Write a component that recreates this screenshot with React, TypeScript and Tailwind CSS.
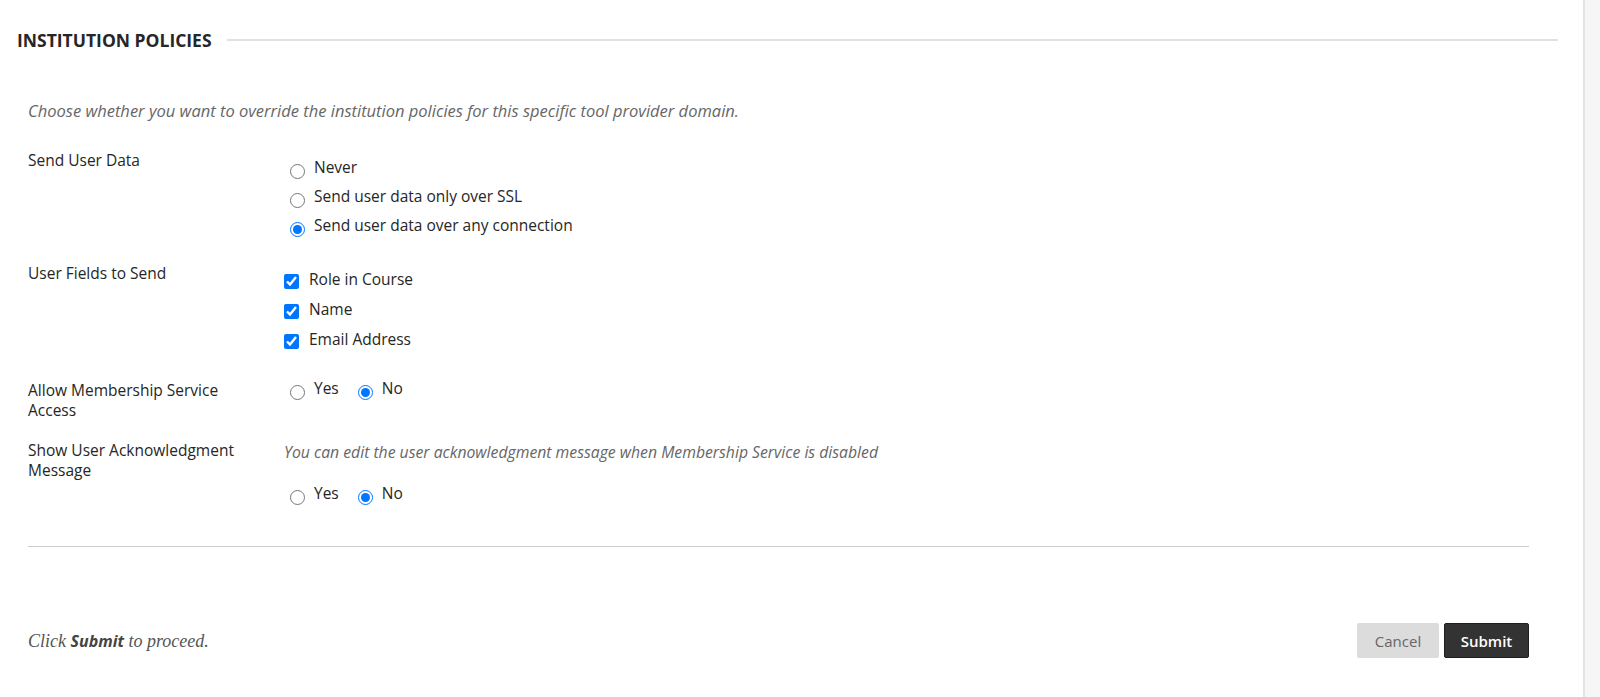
import type { ReactNode } from 'react';

const sans = { fontFamily: '"Open Sans", "Noto Sans", sans-serif' };

function Radio({ label, checked, name }: { label: string; checked?: boolean; name: string }) {
  return (
    <label className="flex items-start">
      <input
        type="radio"
        name={name}
        defaultChecked={checked}
        className="mt-[7px] ml-[6px] h-[15px] w-[15px] shrink-0 accent-[#0075ff]"
      />
      <span className="ml-[9px]">{label}</span>
    </label>
  );
}

function Checkbox({ label }: { label: string }) {
  return (
    <label className="flex items-start">
      <input type="checkbox" defaultChecked className="mt-[4.5px] h-[15px] w-[15px] shrink-0 accent-[#0075ff]" />
      <span className="ml-[10px]">{label}</span>
    </label>
  );
}

function Row({ label, className, children }: { label: ReactNode; className?: string; children: ReactNode }) {
  return (
    <div className={`flex ${className ?? ''}`}>
      <div className="w-[256px] shrink-0 pr-[24px] text-[#262626]">{label}</div>
      <div className="flex-1 text-[#262626]">{children}</div>
    </div>
  );
}

export default function App() {
  return (
    <div className="flex h-[697px] w-full bg-white" style={sans}>
      <main className="flex-1">
        <div className="flex items-center pt-[28px] pl-[17px] pr-[25px]">
          <h2 className="text-[17.5px] font-bold uppercase leading-[24px] text-[#262626]">Institution Policies</h2>
          <div className="ml-[15px] h-[2px] flex-1 bg-[#e1e1e1]" />
        </div>

        <div className="pl-[28px] pr-[54px] text-[15.5px] leading-[20px]">
          <p className="mt-[49px] text-[16.5px] italic text-[#666666]">
            Choose whether you want to override the institution policies for this specific tool provider domain.
          </p>

          <Row label="Send User Data" className="mt-[29px]">
            <div className="flex flex-col gap-[7px] pt-[7px]">
              <Radio name="send" label="Never" />
              <Radio name="send" label="Send user data only over SSL" />
              <Radio name="send" label="Send user data over any connection" checked />
            </div>
          </Row>

          <Row label="User Fields to Send" className="mt-[26px]">
            <div className="flex flex-col gap-[10px] pt-[6px]">
              <Checkbox label="Role in Course" />
              <Checkbox label="Name" />
              <Checkbox label="Email Address" />
            </div>
          </Row>

          <Row label="Allow Membership Service Access" className="mt-[31px]">
            <div className="-mt-[2px] flex gap-[13px]">
              <Radio name="member" label="Yes" />
              <Radio name="member" label="No" checked />
            </div>
          </Row>

          <Row label="Show User Acknowledgment Message" className="mt-[20px]">
            <p className="pt-[2px] text-[15.75px] italic text-[#666666]">
              You can edit the user acknowledgment message when Membership Service is disabled
            </p>
            <div className="mt-[21px] flex gap-[13px]">
              <Radio name="ack" label="Yes" />
              <Radio name="ack" label="No" checked />
            </div>
          </Row>

          <div className="mt-[41px] h-[1px] bg-[#cccccc]" />

          <div className="mt-[76px] flex items-center justify-between">
            <p
              className="text-[18px] italic text-[#555555]"
              style={{ fontFamily: '"Liberation Serif", "DejaVu Serif", serif' }}
            >
              Click{' '}
              <strong className="text-[16px] font-bold text-[#444444]" style={sans}>
                Submit
              </strong>{' '}
              to proceed.
            </p>
            <div className="flex gap-[5px]">
              <button
                type="button"
                className="h-[35px] w-[82px] rounded-[2px] bg-[#dcdcdc] text-[15px] text-[#666666]"
              >
                Cancel
              </button>
              <button
                type="button"
                className="h-[35px] w-[85px] rounded-[2px] border border-[#1f1f1f] bg-[#333333] text-[15px] font-semibold text-white"
              >
                Submit
              </button>
            </div>
          </div>
        </div>
      </main>
      <aside className="w-[17px] shrink-0 border-l-2 border-[#e4e4e4] bg-[#f6f6f6]" />
    </div>
  );
}
